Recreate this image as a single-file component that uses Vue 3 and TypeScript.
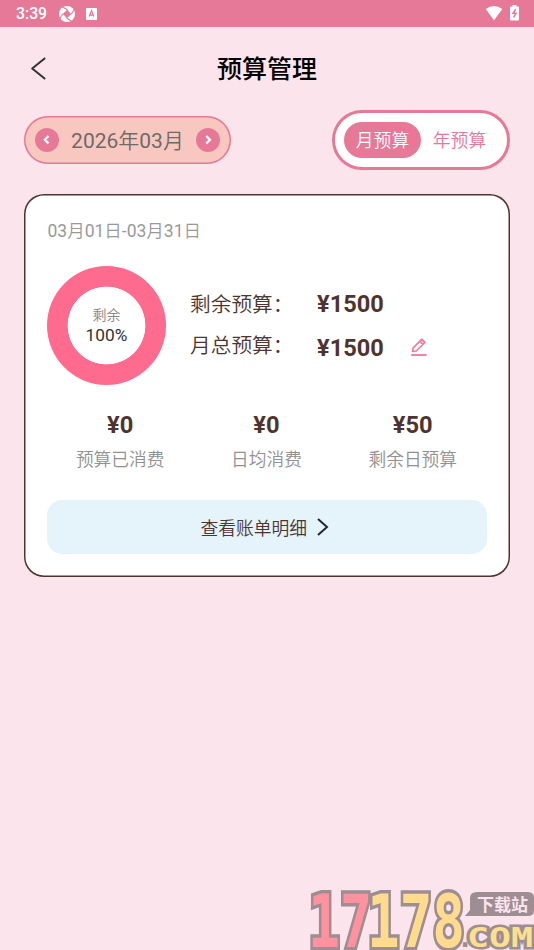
<script setup lang="ts">
import { ref } from 'vue'

interface Stat {
  value: string
  label: string
}

const tabs = ['月预算', '年预算']
const active = ref(0)
const stats: Stat[] = [
  { value: '¥0', label: '预算已消费' },
  { value: '¥0', label: '日均消费' },
  { value: '¥50', label: '剩余日预算' },
]
</script>

<template>
  <div class="screen">
    <div class="status">
      <span class="clock">3:39</span>
      <svg class="swirl" width="16" height="16" viewBox="0 0 16 16">
        <circle cx="8" cy="8" r="8" fill="#fff" />
        <path d="M8.300 3.800 12.200 8.300 7.700 12.200 3.800 7.700Z" fill="#e77998" />
        <path d="M8.300 3.800 3.800 1M12.200 8.300 15 3.800M7.700 12.200 12.200 15M3.800 7.700 1 12.200" stroke="#e77998" stroke-width="1.100" />
      </svg>
      <svg class="badge" width="11" height="12" viewBox="0 0 11 12">
        <rect width="11" height="12" rx="1" fill="#fff" />
        <path d="M3.200 8.600 5.500 2.800 7.800 8.600M4 7h3" fill="none" stroke="#e77998" stroke-width="1.300" />
      </svg>
      <span class="grow"></span>
      <svg class="wifi" width="18" height="15" viewBox="0 0 18 15"><path d="M.7 3Q9-2.800 17.300 3L9 14.200Z" fill="#fff" /></svg>
      <svg class="battery" width="9" height="16" viewBox="0 0 9 16">
        <path d="M2.500 1.500V0h4v1.500H8q1 0 1 1V14.500q0 1-1 1H1q-1 0-1-1V2.500q0-1 1-1Z" fill="#fff" />
        <path d="M5.800 4.300 3 8.300H6L3.600 12.300" fill="none" stroke="#e77998" stroke-width="1.500" />
      </svg>
    </div>

    <header class="header">
      <svg class="back" width="18" height="26" viewBox="0 0 18 26">
        <path d="M15.200 2 2.200 12.500 15.200 23" fill="none" stroke="#333" stroke-width="2" stroke-linejoin="round" />
      </svg>
      <h1>预算管理</h1>
    </header>

    <div class="controls">
      <div class="month">
        <button class="round" aria-label="上个月">
          <svg width="24" height="24" viewBox="0 0 24 24"><path d="M13.500 8 9.800 11.700l3.700 3.700" /></svg>
        </button>
        <span class="month-text">2026<span class="han">年</span>03<span class="han">月</span></span>
        <button class="round" aria-label="下个月">
          <svg width="24" height="24" viewBox="0 0 24 24"><path d="M10.300 8 14 11.700l-3.700 3.700" /></svg>
        </button>
      </div>
      <div class="tabs">
        <button v-for="(tab, i) in tabs" :key="tab" class="tab" :class="{ active: active === i }" @click="active = i">
          {{ tab }}
        </button>
      </div>
    </div>

    <main class="card">
      <div class="range">03<span class="han">月</span>01<span class="han">日</span>-03<span class="han">月</span>31<span class="han">日</span></div>
      <div class="summary">
        <div class="donut">
          <span class="donut-label">剩余</span>
          <span class="donut-value">100%</span>
        </div>
        <div class="rows">
          <div class="row">
            <span class="row-label">剩余预算：</span><strong>¥1500</strong>
          </div>
          <div class="row second">
            <span class="row-label">月总预算：</span><strong>¥1500</strong>
            <svg class="edit" width="18" height="20" viewBox="0 0 18 20">
              <path d="M2.500 14.500 3.200 10.800 11.800 2.200 15 5.400 6.200 14ZM9.800 4.200l3.200 3.200M11.500 2.500l3.200 3.200" fill="none" stroke="#ef7f9e" stroke-width="1.700" stroke-linejoin="round" />
              <path d="M1.200 18h15.300" stroke="#ef7f9e" stroke-width="1.900" />
            </svg>
          </div>
        </div>
      </div>
      <div class="stats">
        <div v-for="stat in stats" :key="stat.label" class="stat">
          <strong>{{ stat.value }}</strong>
          <span>{{ stat.label }}</span>
        </div>
      </div>
      <button class="detail">
        <span>查看账单明细</span>
        <svg width="12" height="18" viewBox="0 0 12 18">
          <path d="M1 1 10 9 1 17" fill="none" stroke="#25243a" stroke-width="2" />
        </svg>
      </button>
    </main>

    <svg class="mark" width="230" height="70" viewBox="0 0 230 70">
      <text class="digit" x="4" y="66.500" textLength="64" lengthAdjust="spacingAndGlyphs" fill="#ff929e">17</text>
      <text class="digit" x="63" y="66.500" textLength="98" lengthAdjust="spacingAndGlyphs" fill="#ffdc8d">178</text>
      <text class="com dot" x="153" y="67">.</text>
      <text class="com" x="163" y="67" textLength="66" lengthAdjust="spacingAndGlyphs" fill="#fbe08e">COM</text>
      <path d="M173 12h51q6 0 6 6v12q0 6-6 6H161l5-6V18q0-6 7-6Z" fill="#9e8e94" />
      <text class="site" x="173" y="31" textLength="51">下载站</text>
    </svg>
  </div>
</template>

<style>
body {
  margin: 0;
  background: #fbe4eb;
}
</style>

<style scoped>
.screen {
  position: relative;
  width: 534px;
  height: 950px;
  overflow: hidden;
  background: #fbe4eb;
  font-family: Roboto, "Noto Sans CJK SC", sans-serif;
  color: #4e342e;
}
.screen * {
  box-sizing: border-box;
}
svg {
  display: block;
  flex: none;
}
button {
  border: 0;
  padding: 0;
  font: inherit;
}
.han {
  font-weight: 350;
}
.status {
  height: 27px;
  display: flex;
  align-items: center;
  padding: 0 15px 0 16px;
  background: #e77998;
  color: #fff;
}
.clock {
  width: 43px;
  font-size: 15.8px;
  font-weight: 500;
}
.badge {
  margin-left: 11px;
}
.grow {
  flex: 1;
}
.wifi {
  margin-right: 7px;
  margin-top: -1px;
}
.battery {
  margin-top: -2px;
}
.header {
  height: 83px;
  display: grid;
  grid-template-columns: 30px 1fr 30px;
  align-items: center;
  padding: 0 30px;
}
h1 {
  margin: 0;
  padding-top: 3px;
  text-align: center;
  font-size: 25px;
  font-weight: 500;
  line-height: 36px;
  color: #000;
}
.controls {
  height: 60px;
  display: flex;
  align-items: center;
  justify-content: space-between;
  padding: 0 24px;
}
.month {
  width: 207px;
  height: 48px;
  display: flex;
  align-items: center;
  justify-content: space-between;
  padding: 0 11px;
  border-radius: 24px;
  box-shadow: inset 0 0 0 1.5px #e77998;
  background: #f8c8c0;
}
.month-text {
  padding-top: 1px;
  font-size: 21px;
  line-height: 30px;
  color: #6e6a68;
}
.round {
  width: 24px;
  height: 24px;
  border-radius: 50%;
  background: #e77998;
}
.round path {
  fill: none;
  stroke: #fff;
  stroke-width: 2.2;
}
.tabs {
  width: 178px;
  height: 60px;
  display: flex;
  align-items: center;
  padding: 0 9px;
  border: 3px solid #e77998;
  border-radius: 30px;
  background: #fff;
}
.tab {
  width: 77px;
  height: 36px;
  padding-top: 1px;
  border-radius: 18px;
  background: transparent;
  font-size: 17.8px;
  font-weight: 350;
  line-height: 36px;
  color: #e77998;
}
.tab.active {
  background: #e77998;
  color: #fff;
}
.card {
  height: 383px;
  margin: 24px 24px 0;
  padding: 23px 23px 0;
  border-radius: 20px;
  box-shadow: inset 0 0 0 1.5px #4e342e;
  background: #fff;
}
.range {
  height: 27px;
  padding: 1px 0 0 0.5px;
  font-size: 17.5px;
  line-height: 27px;
  color: #999;
}
.summary {
  display: flex;
  margin-top: 21.5px;
  height: 119px;
}
.donut {
  width: 119px;
  height: 119px;
  flex: none;
  display: flex;
  flex-direction: column;
  align-items: center;
  justify-content: center;
  border-radius: 50%;
  background: radial-gradient(circle, #fff 38.5px, #ff6b8e 39.2px);
}
.donut-label {
  font-size: 14px;
  font-weight: 350;
  line-height: 20px;
  color: #888;
}
.donut-value {
  font-size: 17.3px;
  line-height: 20px;
  color: #333;
}
.rows {
  padding: 18px 0 0 24px;
}
.row {
  display: flex;
  align-items: center;
  height: 42px;
}
.row-label {
  width: 127px;
  font-size: 20.7px;
  font-weight: 350;
  line-height: 30px;
}
.row strong {
  margin-top: -1px;
  font-size: 23.6px;
  line-height: 30px;
}
.second .row-label {
  margin-top: -2px;
}
.second strong {
  margin-top: 2px;
}
.edit {
  margin-left: 26px;
}
.stats {
  display: grid;
  grid-template-columns: repeat(3, 146.3px);
  margin-top: 24.5px;
}
.stat {
  display: flex;
  flex-direction: column;
  align-items: center;
}
.stat strong {
  font-size: 23.7px;
  line-height: 32px;
}
.stat span {
  margin-top: 6px;
  font-size: 17.7px;
  font-weight: 350;
  line-height: 27px;
  color: #919191;
}
.detail {
  width: 439.5px;
  height: 53.5px;
  margin-top: 26px;
  display: flex;
  align-items: center;
  justify-content: center;
  gap: 10px;
  padding-right: 4px;
  border-radius: 15px;
  background: #e4f4fa;
  font-size: 17.8px;
  font-weight: 350;
  color: #4e342e;
}
.mark {
  position: absolute;
  left: 304px;
  top: 880px;
}
.mark text {
  paint-order: stroke;
  stroke: #9e8e94;
  stroke-linejoin: miter;
}
.mark .digit {
  font: bold 73px "DejaVu Sans Mono", monospace;
  stroke-width: 7px;
}
.mark .com {
  font: bold 27px "DejaVu Sans Mono", monospace;
  stroke-width: 5px;
}
.mark .dot {
  fill: #9e8e94;
  stroke: none;
}
.mark .site {
  font: bold 17px "Noto Sans CJK SC", sans-serif;
  fill: #fbe4eb;
  stroke: none;
}
</style>
